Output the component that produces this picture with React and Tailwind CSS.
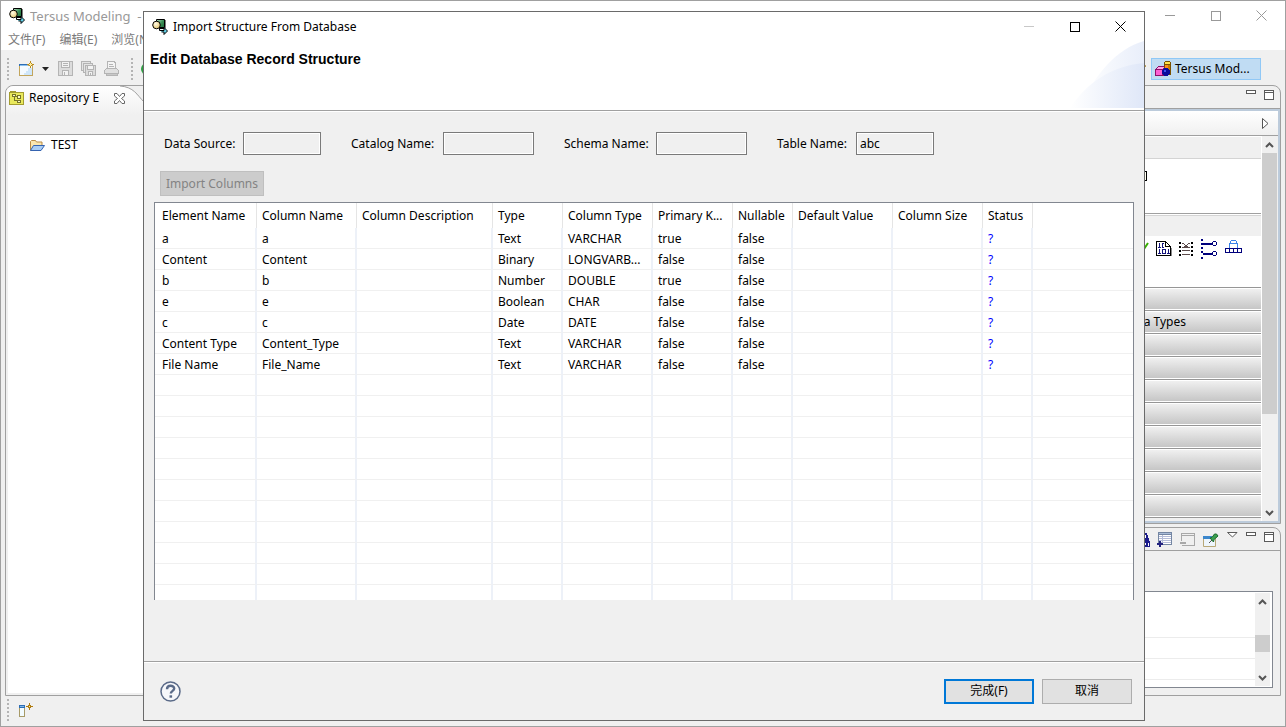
import clsx from 'clsx';

const columns = [
  { name: 'Element Name', width: 'w-[102px]' },
  { name: 'Column Name', width: 'w-[100px]' },
  { name: 'Column Description', width: 'w-[136px]' },
  { name: 'Type', width: 'w-[70px]' },
  { name: 'Column Type', width: 'w-[90px]' },
  { name: 'Primary K...', width: 'w-[80px]' },
  { name: 'Nullable', width: 'w-[60px]' },
  { name: 'Default Value', width: 'w-[100px]' },
  { name: 'Column Size', width: 'w-[90px]' },
  { name: 'Status', width: 'w-[50px]' },
  { name: '', width: '' },
];

const records = [
  ['a', 'a', '', 'Text', 'VARCHAR', 'true', 'false', '', '', '?', ''],
  ['Content', 'Content', '', 'Binary', 'LONGVARB...', 'false', 'false', '', '', '?', ''],
  ['b', 'b', '', 'Number', 'DOUBLE', 'true', 'false', '', '', '?', ''],
  ['e', 'e', '', 'Boolean', 'CHAR', 'false', 'false', '', '', '?', ''],
  ['c', 'c', '', 'Date', 'DATE', 'false', 'false', '', '', '?', ''],
  ['Content Type', 'Content_Type', '', 'Text', 'VARCHAR', 'false', 'false', '', '', '?', ''],
  ['File Name', 'File_Name', '', 'Text', 'VARCHAR', 'false', 'false', '', '', '?', ''],
];

const emptyRows = Array.from({ length: 11 }, () => columns.map(() => ''));

const fields = [
  { id: 'data-source', label: 'Data Source:', value: '', labelWidth: 'w-[79px]', width: 'w-[78px]' },
  { id: 'catalog-name', label: 'Catalog Name:', value: '', labelWidth: 'w-[92px]', width: 'w-[91px]' },
  { id: 'schema-name', label: 'Schema Name:', value: '', labelWidth: 'w-[92px]', width: 'w-[91px]' },
  { id: 'table-name', label: 'Table Name:', value: 'abc', labelWidth: 'w-[79px]', width: 'w-[78px]' },
];

const drawers = ['', 'Data Types', '', '', '', '', '', '', '', ''];

const TersusIcon = () => (
  <svg width="16" height="16" viewBox="0 0 16 16" aria-hidden="true">
    <defs>
      <linearGradient id="tersus-box" x1="0" y1="0" x2="1" y2="1">
        <stop offset="0" stopColor="#b9dfc4" />
        <stop offset=".5" stopColor="#3c9158" />
        <stop offset="1" stopColor="#1d6b3a" />
      </linearGradient>
      <radialGradient id="tersus-ball" cx=".4" cy=".35" r=".6">
        <stop offset="0" stopColor="#fffbe6" />
        <stop offset="1" stopColor="#e8cc7a" />
      </radialGradient>
    </defs>
    <path d="M4.500.500h8v8h-8z" fill="url(#tersus-box)" stroke="#000" />
    <path d="M13 1v8.500H7" fill="none" stroke="#000" />
    <circle cx="4.500" cy="6" r="3.800" fill="url(#tersus-ball)" stroke="#000" />
    <path d="M7.500 9.500v2H12V8.500l3.500 3.500L12 15.500V13H9.500" fill="#62cfe6" stroke="#000" />
  </svg>
);

const NewIcon = () => (
  <svg width="16" height="16" viewBox="0 0 16 16" shapeRendering="crispEdges" aria-hidden="true">
    <path d="M0 3h14v12H0z" fill="#c2a55c" />
    <path d="M1 5h12v9H1z" fill="#f4faff" />
    <path d="M0 3h9v2H0z" fill="#2d6db5" />
    <path d="M1 4h8v1H1z" fill="#8cc0ee" />
    <path d="M9 7h4v7H5v-2h2v-2h2z" fill="#cfe6fa" />
    <path d="M11 0h1v2h1v1h2v1h-2v1h-1v2h-1V5h-1V4H8V3h2V2h1z" fill="#b98a1c" />
    <path d="M11 2h1v3h-1zM10 3h3v1h-3z" fill="#fff0a0" />
  </svg>
);

const SaveIcon = () => (
  <svg width="15" height="15" viewBox="0 0 15 15" fill="none" stroke="#b4b4b4" shapeRendering="crispEdges" aria-hidden="true">
    <path d="M.500.500h14v14H.500z" fill="#dcdcdc" />
    <path d="M3.500.500h8v6h-8z" fill="#f2f2f2" />
    <path d="M5 2.500h5M5 4.500h5" />
    <path d="M4.500 9.500h6v5h-6z" fill="#f2f2f2" />
    <path d="M6.500 11v3" />
  </svg>
);

const SaveAllIcon = () => (
  <svg width="15" height="15" viewBox="0 0 15 15" fill="#e4e4e4" stroke="#b4b4b4" shapeRendering="crispEdges" aria-hidden="true">
    <path d="M.500.500h9v9h-9z" />
    <path d="M2.500 2.500h9v9h-9z" />
    <path d="M4.500 4.500h10v10h-10z" fill="#dcdcdc" />
    <path d="M6.500 4.500h6v4h-6zM7.500 10.500h4v4h-4z" fill="#f2f2f2" />
    <path d="M9.500 12v2" />
  </svg>
);

const PrintIcon = () => (
  <svg width="15" height="15" viewBox="0 0 15 15" fill="#e0e0e0" stroke="#b4b4b4" shapeRendering="crispEdges" aria-hidden="true">
    <path d="M4.500.500h6l1 2v5h-8v-7z" fill="#f4f4f4" />
    <path d="M5 3.500h4M5 5.500h5" />
    <path d="M2.500 7.500h10l2 2v3H.500v-3z" />
    <path d="M2 12.500h11v2H2z" fill="#c8c8c8" />
  </svg>
);

const RepositoryIcon = () => (
  <svg width="15" height="14" viewBox="0 0 15 14" shapeRendering="crispEdges" aria-hidden="true">
    <path d="M0 1h1V0h6v1h8v13H0z" fill="#a39c30" />
    <path d="M1 2h13v11H1z" fill="#e9e95c" />
    <path d="M3 3h4v3H6v3h2v1H5V6H3zM8 4h4v4H8V6H6V5h2zM8 9h4v3H8z" fill="#76742a" />
    <path d="M4 4h2v1H4zM9 5h2v2H9zM9 10h2v1H9z" fill="#fbfbc8" />
  </svg>
);

const FolderIcon = () => (
  <svg width="16" height="13" viewBox="0 0 16 13" aria-hidden="true">
    <path d="M1.500 11.500v-9l1-1h4l1 1.500h5.500v3" fill="#fbe6ae" stroke="#b98b45" />
    <path d="M1.500 11.500 4.500 6.500h11l-3.500 5z" fill="#a9cdf5" stroke="#3563b0" />
  </svg>
);

const PerspectiveIcon = () => (
  <svg width="16" height="16" viewBox="0 0 16 16" shapeRendering="crispEdges" aria-hidden="true">
    <path d="M0 8h1V7h1V6h1V5h7v10H0z" fill="#8d1069" />
    <path d="M1 9h6v5H1z" fill="#fb5fd3" />
    <path d="M3 6h6v1H8v1H2V7h1z" fill="#ffa6ea" />
    <path d="M9 1h1V0h5v1h1v13H9z" fill="#7a5200" />
    <path d="M10 1h5v2h-5z" fill="#ffe44a" />
    <path d="M10 4h3v9h-3z" fill="#ff8c1a" />
    <path d="M13 4h2v9h-2z" fill="#c97c00" />
    <path d="M9 7h4v1h1v1h1v4h-1v1h-1v1H9v-1H8v-1H7V9h1V8h1z" fill="#0a0a9c" />
    <path d="M9 9h2v2H9z" fill="#3b55f0" />
  </svg>
);

const BinaryIcon = () => (
  <svg width="16" height="16" viewBox="0 0 16 16" shapeRendering="crispEdges" aria-hidden="true">
    <path d="M2 15h14V7h-1v7H2z" fill="#8a8a8a" />
    <path d="M0 0h10v1h1v1h1v1h1v1h1v1h1v10H0z" fill="#000" />
    <path d="M1 1h8v5h5v8H1z" fill="#fff" />
    <path d="M10 2h1v1h1v1h1v1h-3z" fill="#fff" />
    <path d="M2 3h1V2h1v4h1v1H2V6h1V3zM6 2h2v1H7v3h1v1H6zM2 9h1V8h1v4h1v1H2v-1h1V9zM6 8h4v5H6zM11 9h1V8h1v4h1v1h-3v-1h1V9z" fill="#14147c" />
    <path d="M7 9h2v3H7z" fill="#fff" />
  </svg>
);

const MapIcon = () => (
  <svg width="15" height="15" viewBox="0 0 15 15" shapeRendering="crispEdges" aria-hidden="true">
    <path d="M0 0h2v2H0zM0 4h2v2H0zM0 8h2v2H0zM0 12h2v2H0zM12 0h2v2h-2zM12 4h2v2h-2zM12 8h2v2h-2zM12 12h2v2h-2z" fill="#000" />
    <path d="M3 1h2v1h1v1h2V2h1V1h2v1H9v1H8v1h1v1h2v1H3V5h2V4h1V3H5V2H3zM3 8h8v1H3zM3 12h8v1H3z" fill="#5b4a4a" />
  </svg>
);

const BranchIcon = () => (
  <svg width="17" height="20" viewBox="0 0 17 20" shapeRendering="crispEdges" aria-hidden="true">
    <path d="M0 0h2v2H0zM0 4h2v2H0zM0 8h2v2H0zM0 12h2v2H0zM0 18h2v2H0zM2 4h9v2H2zM2 14h9v2H2z" fill="#00007c" />
    <path d="M12 2h3v1h1v3h-1v1h-3V6h-1V3h1zM12 12h3v1h1v3h-1v1h-3v-1h-1v-3h1z" fill="#00007c" />
    <path d="M12 3h3v3h-3zM12 13h3v3h-3z" fill="#fff" />
  </svg>
);

const ServiceIcon = () => (
  <svg width="17" height="14" viewBox="0 0 17 14" fill="none" shapeRendering="crispEdges" aria-hidden="true">
    <path d="M4.500 8V3.500h8V8M5.500 3V1.500l1-1h4l1 1V3" stroke="#3b82e8" />
    <path d="M.500 8.500h16v4H.500zM4.500 9v3M8.500 9v3M12.500 9v3" stroke="#00007c" />
  </svg>
);

const AddRowIcon = () => (
  <svg width="16" height="15" viewBox="0 0 16 15" shapeRendering="crispEdges" aria-hidden="true">
    <path d="M1 0h14v13H1z" fill="#7486a3" />
    <path d="M2 3h12v9H2z" fill="#fff" />
    <path d="M2 1h12v1H2z" fill="#a9bcd8" />
    <path d="M2 4h12v1H2zM2 6h12v1H2zM2 8h12v1H2zM2 10h12v1H2zM5 3h1v9H5z" fill="#b4bcd8" />
    <path d="M2 9h2v2h2v2H4v2H2v-2H0v-2h2z" fill="#23237f" />
  </svg>
);

const RemoveRowIcon = () => (
  <svg width="16" height="14" viewBox="0 0 16 14" fill="none" stroke="#a8a8a8" shapeRendering="crispEdges" aria-hidden="true">
    <path d="M1.500 8V.500h13v12H2M2 2.500h12" />
    <path d="M0 10h6" strokeWidth="2" />
  </svg>
);

const PinIcon = () => (
  <svg width="16" height="14" viewBox="0 0 16 14" aria-hidden="true">
    <path d="M.500 3.500h12v10H.500z" fill="#eef6fd" stroke="#b8a878" />
    <path d="M0 3h9v3H0z" fill="#3c87cc" />
    <path d="m6 10 3-3" stroke="#555" />
    <path d="m7 5 2-.5 2.500-3.500 2 0 1.500 2-4 3.500-.500 2.500z" fill="#3aa050" stroke="#1c6b2c" />
  </svg>
);

const MinimizeIcon = () => (
  <svg width="10" height="4" viewBox="0 0 10 4" fill="#fff" stroke="#5a5a5a" shapeRendering="crispEdges" aria-hidden="true">
    <path d="M.500.500h9v3h-9z" />
  </svg>
);

const MaximizeIcon = () => (
  <svg width="10" height="10" viewBox="0 0 10 10" fill="#fff" stroke="#5a5a5a" shapeRendering="crispEdges" aria-hidden="true">
    <path d="M.500.500h9v9h-9zM0 2.500h10" />
  </svg>
);

const Chevron = ({ down }) => (
  <svg width="9" height="6" viewBox="0 0 9 6" fill="none" stroke="#555" strokeWidth="2" className={down ? 'rotate-180' : ''} aria-hidden="true">
    <path d="m1 5 3.500-3.500L8 5" />
  </svg>
);

const FastViewIcon = () => (
  <svg width="15" height="14" viewBox="0 0 15 14" shapeRendering="crispEdges" aria-hidden="true">
    <path d="M0 2h6v12H0z" fill="#a79a68" />
    <path d="M1 5h4v8H1z" fill="#f2fbff" />
    <path d="M0 2h6v3H0z" fill="#2d6db5" />
    <path d="M1 3h4v1H1z" fill="#7fb6ea" />
    <path d="M10 0h1v2h1v1h2v1h-2v1h-1v2h-1V5H9V4H7V3h2V2h1z" fill="#b07c10" />
    <path d="M10 3h1v1h-1z" fill="#fff0a0" />
  </svg>
);

const Grip = () => (
  <div className="h-[22px] w-[2px] bg-[repeating-linear-gradient(to_bottom,#b4b4b4_0_2px,transparent_2px_4px)]" />
);

const WindowControls = ({ active }) => (
  <div className="flex pr-px">
    <button aria-label="Minimize" className={clsx('flex h-[30px] w-[46px] items-center justify-center', active ? 'text-[#c8c8c8]' : 'text-[#999]')}>
      <svg width="10" height="1" aria-hidden="true"><path d="M0 0h10v1H0z" fill="currentColor" /></svg>
    </button>
    <button aria-label="Maximize" className={clsx('flex h-[30px] w-[45px] items-center justify-center', active ? 'text-black' : 'text-[#999]')}>
      <svg width="10" height="10" fill="none" stroke="currentColor" shapeRendering="crispEdges" aria-hidden="true"><path d="M.500.500h9v9h-9z" /></svg>
    </button>
    <button aria-label="Close" className={clsx('flex h-[30px] w-[46px] items-center justify-center', active ? 'text-black' : 'text-[#999]')}>
      <svg width="11" height="11" fill="none" stroke="currentColor" aria-hidden="true"><path d="m.500.500 10 10M10.500.500l-10 10" /></svg>
    </button>
  </div>
);

const ScrollBar = ({ children }) => (
  <div className="flex w-[15px] shrink-0 flex-col items-center bg-[#f0f0f0]">
    <div className="flex h-[17px] shrink-0 items-center"><Chevron /></div>
    {children}
    <div className="flex h-[17px] shrink-0 items-center"><Chevron down /></div>
  </div>
);

const RepositoryView = () => (
  <section className="flex w-[260px] shrink-0 flex-col rounded-t-lg border border-[#a0a0a0] bg-[#f0f0f0] px-[2px] pb-[2px]">
    <div className="-mx-[2px] h-12 overflow-hidden rounded-t-lg bg-linear-to-b from-white to-[#f0f0f0] to-60%">
      <div className="relative flex h-6 items-center pl-[3px]">
        {/* curved right edge of the tab */}
        <svg width="146" height="48" viewBox="0 0 146 48" className="absolute top-0 left-[114px]" aria-hidden="true">
          <path d="M0 0c14 1 17 9 24 16 8 10 14 14 26 32h96V0z" fill="#f0f0f0" />
          <path d="M0 0c14 1 17 9 24 16 6 7 9 10 14 12" fill="none" stroke="#a0a0a0" />
        </svg>
        <RepositoryIcon />
        <span className="ml-[5px]">Repository E</span>
        <button aria-label="Close view" className="ml-[15px]">
          <svg width="11" height="11" viewBox="0 0 11 11" fill="#fff" stroke="#666" aria-hidden="true">
            <path d="M.500.500h2.500l2.500 3 2.500-3h2.500v2.500l-3 2.500 3 2.500v2.500H8l-2.500-3-2.500 3H.500V8l3-2.500-3-2.500z" />
          </svg>
        </button>
      </div>
    </div>
    <div className="flex-1 border-t border-[#a0a0a0] bg-white">
      <div className="flex h-[20px] items-center gap-[6px] pl-[21px]">
        <FolderIcon />
        <span>TEST</span>
      </div>
    </div>
  </section>
);

const PaletteView = () => (
  <section className="flex h-[439px] shrink-0 flex-col rounded-tr-lg border border-[#a0a0a0] bg-[#f0f0f0]">
    <div className="flex h-[22px] items-start justify-end gap-2 pt-1 pr-[6px]">
      <button aria-label="Minimize view"><MinimizeIcon /></button>
      <button aria-label="Maximize view"><MaximizeIcon /></button>
    </div>
    <div className="flex min-h-0 flex-1 flex-col border-t border-[#a0a0a0]">
      <div className="flex min-h-0 flex-1 flex-col border-2 border-[#bccbdb]">
        <div className="flex h-[25px] shrink-0 items-center justify-end border-b border-[#a0a0a0] bg-linear-to-b from-white to-[#f0f0f0] pr-[9px]">
          <svg width="7" height="11" viewBox="0 0 7 11" fill="#fff" stroke="#555" aria-hidden="true"><path d="M.500.500v10l5.500-5z" /></svg>
        </div>
        <div className="flex min-h-0 flex-1">
          <div className="flex min-w-0 flex-1 flex-col overflow-hidden border-t border-r border-white bg-white">
            <div className="h-[22px] shrink-0 border-b border-[#d4d4d4] bg-[#f0f0f0]" />
            <div className="flex h-[55px] shrink-0 items-start justify-end border-b border-[#a0a0a0] pt-[10px] pr-[114px]">
              <svg width="9" height="12" viewBox="0 0 9 12" fill="#fffff0" stroke="#000" shapeRendering="crispEdges" aria-hidden="true"><path d="M.500 11.500V.500h6v2h2v9z" /></svg>
            </div>
            <div className="mt-px h-[21px] shrink-0 border-t border-[#d4d4d4] bg-[#f0f0f0]" />
            <div className="flex h-[51px] shrink-0 items-start justify-end gap-[7px] pt-[3px] pr-[19px]">
              <svg width="10" height="16" viewBox="0 0 10 16" fill="none" stroke="#38b000" strokeWidth="2" aria-hidden="true"><path d="m1 4 3 6M9 4l-4 6v4" /></svg>
              <div className="flex h-5 items-center"><BinaryIcon /></div>
              <div className="flex h-5 items-center"><MapIcon /></div>
              <BranchIcon />
              <div className="flex h-4 items-center"><ServiceIcon /></div>
            </div>
            {drawers.map((label, i) => (
              <div key={i} className="h-[23px] shrink-0 border-t border-[#969696] bg-white pt-px pb-px">
                <div className="flex h-5 items-center justify-end bg-linear-to-b from-[#f0f0f0] to-[#c6c6c6] pr-[75px]">
                  {label}
                </div>
              </div>
            ))}
            <div className="h-[5px] shrink-0 border-t border-[#969696] bg-[#f0f0f0]" />
          </div>
          <div className="flex bg-[#f0f0f0] pr-px">
            <ScrollBar>
              <div className="h-[261px] w-full bg-[#cdcdcd]" />
              <div className="flex-1" />
            </ScrollBar>
          </div>
        </div>
      </div>
    </div>
  </section>
);

const PropertiesView = () => (
  <section className="flex min-h-0 flex-1 flex-col rounded-tr-lg border border-[#a0a0a0] bg-[#f0f0f0]">
    <div className="flex h-[23px] shrink-0 items-start justify-end gap-2 border-b border-[#a0a0a0] pt-1 pr-[6px]">
      <div className="flex gap-[7px]">
        <button aria-label="Find">
          <svg width="14" height="14" viewBox="0 0 14 14" shapeRendering="crispEdges" aria-hidden="true">
            <path d="M8 0h3v2h1v3h1v3H6V2h2zM7 8h7v6H7z" fill="#1c1c8c" />
            <path d="M9 2h1v3H9zM9 10h1v2H9zM12 10h1v3h-1z" fill="#fff" />
          </svg>
        </button>
        <button aria-label="Add row"><AddRowIcon /></button>
        <button aria-label="Remove row"><RemoveRowIcon /></button>
        <button aria-label="Pin"><PinIcon /></button>
      </div>
      <button aria-label="View menu">
        <svg width="11" height="6" viewBox="0 0 11 6" fill="#fff" stroke="#5a5a5a" aria-hidden="true"><path d="M.500.500h9.500l-4.500 4.500z" /></svg>
      </button>
      <button aria-label="Minimize view"><MinimizeIcon /></button>
      <button aria-label="Maximize view"><MaximizeIcon /></button>
    </div>
    <div className="mt-10 mr-[7px] mb-[7px] flex min-h-0 flex-1 border border-[#828790] bg-white py-px pr-[2px]">
      <div className="flex-1 overflow-hidden">
        <div className="h-[45px] border-b border-[#ececec]" />
        <div className="h-[21px] border-b border-[#ececec]" />
        <div className="h-[21px] border-b border-[#ececec]" />
      </div>
      <ScrollBar>
        <div className="grow-3" />
        <div className="h-[17px] w-full bg-[#cdcdcd]" />
        <div className="grow-2" />
      </ScrollBar>
    </div>
  </section>
);

const MainWindow = () => (
  <div className="flex h-full flex-col border border-[#a0a0a0] bg-[#f0f0f0]">
    <header className="bg-white">
      <div className="flex h-[29px] items-center pl-2 text-[#999]">
        <TersusIcon />
        <span className="ml-[5px] flex-1 text-[13px] whitespace-pre">Tersus Modeling  -</span>
        <WindowControls />
      </div>
      <nav className="flex h-[20px] items-center gap-[14px] pl-[7px] text-[#7a7a7a]">
        <button>文件(F)</button>
        <button>编辑(E)</button>
        <button>浏览(N)</button>
      </nav>
    </header>
    <div className="flex h-[35px] shrink-0 items-center pt-[2px] pl-[6px]">
      <Grip />
      <button aria-label="New" className="ml-[10px]"><NewIcon /></button>
      <svg width="7" height="4" viewBox="0 0 7 4" className="ml-[7px]" aria-hidden="true"><path d="M0 0h7L3.500 4z" fill="#222" /></svg>
      <button aria-label="Save" className="ml-[9px]"><SaveIcon /></button>
      <button aria-label="Save all" className="ml-2"><SaveAllIcon /></button>
      <button aria-label="Print" className="ml-2"><PrintIcon /></button>
      <div className="ml-3"><Grip /></div>
      <svg width="12" height="12" viewBox="0 0 12 12" className="ml-2" aria-hidden="true"><circle cx="6" cy="6" r="6" fill="#2f9e44" /></svg>
      <div className="flex-1" />
      <svg width="6" height="13" viewBox="0 0 6 13" fill="none" stroke="#b99a52" aria-hidden="true"><path d="m1 1 4 3-2 2v7" /></svg>
      <button className="mr-6 ml-1 flex h-[22px] w-[110px] items-center gap-1 border border-[#90c8f6] bg-[#c0dcf3] pl-[3px]">
        <PerspectiveIcon />
        Tersus Mod...
      </button>
    </div>
    <div className="flex min-h-0 flex-1 pr-1 pl-1">
      <RepositoryView />
      <div className="flex-1" />
      <div className="flex w-[300px] shrink-0 flex-col gap-[3px]">
        <PaletteView />
        <PropertiesView />
      </div>
    </div>
    <footer className="flex h-[30px] shrink-0 items-center pb-[2px] pl-[6px]">
      <Grip />
      <button aria-label="Show view as fast view" className="ml-[10px]"><FastViewIcon /></button>
    </footer>
  </div>
);

const RecordTable = () => (
  <div className="mx-[10px] mt-[6px] min-h-0 flex-1 overflow-hidden border border-b-0 border-[#828790] bg-white">
    <table className="w-full table-fixed border-separate border-spacing-0">
      <colgroup>
        {columns.map((column, i) => (
          <col key={i} className={column.width} />
        ))}
      </colgroup>
      <thead>
        <tr>
          {columns.map((column, i) => (
            <th
              key={i}
              className={clsx(
                'h-[25px] p-0 text-left font-normal whitespace-nowrap',
                i === 0 ? 'pl-[7px]' : 'pl-[5px]',
                i < columns.length - 1 && 'border-r border-[#e5e5e5]'
              )}
            >
              {column.name}
            </th>
          ))}
        </tr>
      </thead>
      <tbody>
        {[...records, ...emptyRows].map((row, r) => (
          <tr key={r}>
            {row.map((cell, i) => (
              <td
                key={i}
                className={clsx(
                  'h-[21px] border-b border-[#f0f0f0] p-0 pt-[2px] whitespace-nowrap',
                  i === 0 ? 'pl-[7px]' : 'pl-[5px]',
                  i < columns.length - 1 && 'border-r-2 border-r-[#edf1f8]',
                  i === 9 && 'text-[#0000ff]'
                )}
              >
                {cell}
              </td>
            ))}
          </tr>
        ))}
      </tbody>
    </table>
  </div>
);

const ImportDialog = () => (
  <div
    role="dialog"
    aria-labelledby="dialog-title"
    className="absolute top-[11px] right-[141px] bottom-[6px] left-[143px] flex flex-col border border-[#6a6a6a] bg-[#f0f0f0]"
  >
    <header className="relative h-[99px] shrink-0 border-b border-[#a0a0a0] bg-white">
      <svg width="76" height="67" viewBox="0 0 76 67" className="absolute right-0 bottom-[2px]" aria-hidden="true">
        <defs>
          <linearGradient id="swoosh" x1="0" x2="1">
            <stop offset="0" stopColor="#fff" />
            <stop offset="1" stopColor="#dfe7f8" />
          </linearGradient>
        </defs>
        <path d="M12 67C26 34 48 8 76 0v67z" fill="url(#swoosh)" opacity=".7" />
        <path d="M2 67c16-24 40-42 74-45v45z" fill="url(#swoosh)" />
      </svg>
      <div className="flex h-[29px] items-center pl-2">
        <TersusIcon />
        <h1 id="dialog-title" className="ml-[5px] flex-1">Import Structure From Database</h1>
        <WindowControls active />
      </div>
      <h2 className="mt-[9px] pl-[6px] font-['Liberation_Sans',sans-serif] text-[14px] leading-[18px] font-bold">
        Edit Database Record Structure
      </h2>
    </header>
    <div className="flex shrink-0 gap-[30px] border-t border-white pt-5 pl-5">
      {fields.map((field) => (
        <div key={field.id} className="flex items-center">
          <label htmlFor={field.id} className={field.labelWidth}>{field.label}</label>
          <input
            id={field.id}
            readOnly
            defaultValue={field.value}
            className={clsx('h-[23px] border border-[#7a7a7a] bg-[#f0f0f0] px-[3px] outline-none inset-ring inset-ring-white', field.width)}
          />
        </div>
      ))}
    </div>
    <div className="flex shrink-0 pt-4 pl-4">
      <button disabled className="h-[25px] w-[104px] border border-[#bfbfbf] bg-[#cccccc] whitespace-nowrap text-[#838383]">
        Import Columns
      </button>
    </div>
    <RecordTable />
    <footer className="mt-[61px] flex h-[59px] shrink-0 items-center border-t border-[#a0a0a0] inset-shadow-[0_1px_0_#fff] pr-3 pl-4">
      <button aria-label="Help" className="flex-1">
        <svg width="21" height="21" viewBox="0 0 21 21" aria-hidden="true">
          <circle cx="10.500" cy="10.500" r="9.500" fill="#f6f7fa" stroke="#5a6a88" strokeWidth="1.500" />
          <path d="M7 8.200c0-4.600 7.200-4.400 7.200-.6 0 2.400-3.400 2.200-3.400 5" fill="none" stroke="#5a6a88" strokeWidth="2.400" />
          <path d="M9.500 14.300h2.600v2.400H9.500z" fill="#5a6a88" />
        </svg>
      </button>
      <button className="h-[25px] w-[90px] border-2 border-[#0078d7] bg-[#e1e1e1]">完成(F)</button>
      <button className="ml-2 h-[25px] w-[90px] border border-[#adadad] bg-[#e1e1e1]">取消</button>
    </footer>
  </div>
);

const App = () => {
  return (
    <div className="relative h-screen min-h-[600px] overflow-hidden bg-[#f0f0f0] font-['Noto_Sans','Noto_Sans_CJK_SC',sans-serif] text-[12px] leading-[16px] text-black">
      <MainWindow />
      <ImportDialog />
    </div>
  );
};

export default App;
